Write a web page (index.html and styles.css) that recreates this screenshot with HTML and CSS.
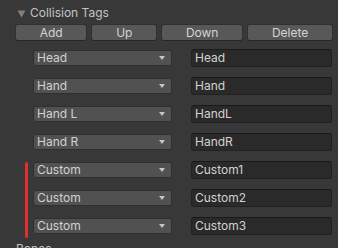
FILE: index.html
```html
<!DOCTYPE html>
<html lang="en">
<head>
    <meta charset="UTF-8">
    <meta name="viewport" content="width=device-width, initial-scale=1.0">
    <title>Collision Tags</title>
    <link rel="stylesheet" href="styles.css">
</head>
<body>
    <div class="inspector">
        <div class="foldout-header">
            <svg class="foldout-arrow" width="9" height="8" viewBox="0 0 9 8"><polygon points="0.5,0.5 8.5,0.5 4.5,7.5" fill="#7f7f7f"/></svg>
            <span>Collision Tags</span>
        </div>

        <div class="toolbar">
            <button class="btn">Add</button>
            <button class="btn">Up</button>
            <button class="btn">Down</button>
            <button class="btn">Delete</button>
        </div>

        <div class="tag-list">
            <div class="tag-row">
                <div class="popup"><span>Head</span><span class="popup-arrow"></span></div>
                <div class="field">Head</div>
            </div>
            <div class="tag-row">
                <div class="popup"><span>Hand</span><span class="popup-arrow"></span></div>
                <div class="field">Hand</div>
            </div>
            <div class="tag-row">
                <div class="popup"><span>Hand L</span><span class="popup-arrow"></span></div>
                <div class="field">HandL</div>
            </div>
            <div class="tag-row">
                <div class="popup"><span>Hand R</span><span class="popup-arrow"></span></div>
                <div class="field">HandR</div>
            </div>

            <div class="custom-group">
                <div class="custom-bar"></div>
                <div class="custom-rows">
                    <div class="tag-row">
                        <div class="popup"><span>Custom</span><span class="popup-arrow"></span></div>
                        <div class="field">Custom1</div>
                    </div>
                    <div class="tag-row">
                        <div class="popup"><span>Custom</span><span class="popup-arrow"></span></div>
                        <div class="field">Custom2</div>
                    </div>
                    <div class="tag-row">
                        <div class="popup"><span>Custom</span><span class="popup-arrow"></span></div>
                        <div class="field">Custom3</div>
                    </div>
                </div>
            </div>
        </div>

        <div class="next-label">Bones</div>
    </div>
</body>
</html>
```

FILE: styles.css
```css
body {
    margin: 0;
    padding: 0;
    background: #383838;
    font-family: Inter, "Noto Sans", sans-serif;
    font-size: 12px;
    color: #c4c4c4;
    overflow: hidden;
}

.inspector {
    padding: 4px 5px 0 15px;
}

.foldout-header {
    display: flex;
    align-items: center;
    height: 18px;
    line-height: 18px;
    padding-left: 2px;
}
.foldout-arrow {
    margin: 1px 4px 0 0;
}

.toolbar {
    display: flex;
    gap: 4px;
    margin-top: 2px;
}
.btn {
    flex: 1 1 auto;
    height: 17px;
    padding: 0;
    font-family: inherit;
    font-size: 12px;
    line-height: 15px;
    color: #d4d4d4;
    background: #585858;
    border: 1px solid #303030;
    border-bottom-color: #262626;
    border-radius: 3px;
}

.tag-list {
    display: flex;
    flex-direction: column;
    gap: 10px;
    margin-top: 8px;
}
.custom-rows {
    display: flex;
    flex-direction: column;
    gap: 10px;
}
.tag-row {
    display: flex;
    align-items: center;
    height: 18px;
    padding-left: 18px;
}
.custom-rows .tag-row {
    padding-left: 0;
}

.popup {
    display: flex;
    align-items: center;
    justify-content: space-between;
    box-sizing: border-box;
    width: 139px;
    height: 16px;
    padding: 0 6px 0 3px;
    background: #515151;
    border: 1px solid #303030;
    border-radius: 3px;
    color: #d2d2d2;
    line-height: 14px;
}
.popup-arrow {
    width: 0;
    height: 0;
    border-left: 3.5px solid transparent;
    border-right: 3.5px solid transparent;
    border-top: 4px solid #c4c4c4;
}

.field {
    box-sizing: border-box;
    margin-left: 19px;
    width: 141px;
    height: 18px;
    padding: 0 3px;
    line-height: 16px;
    background: #2a2a2a;
    border: 1px solid #212121;
    border-top-color: #1a1a1a;
    border-radius: 3px;
    color: #d2d2d2;
}

.custom-group {
    display: flex;
    padding-bottom: 3px;
}
.custom-bar {
    width: 3px;
    margin: 1px 5px -3px 10px;
    background: #e0302c;
    border-radius: 2px;
}

.next-label {
    margin-top: 2px;
    padding-left: 1px;
    line-height: 18px;
}
```
